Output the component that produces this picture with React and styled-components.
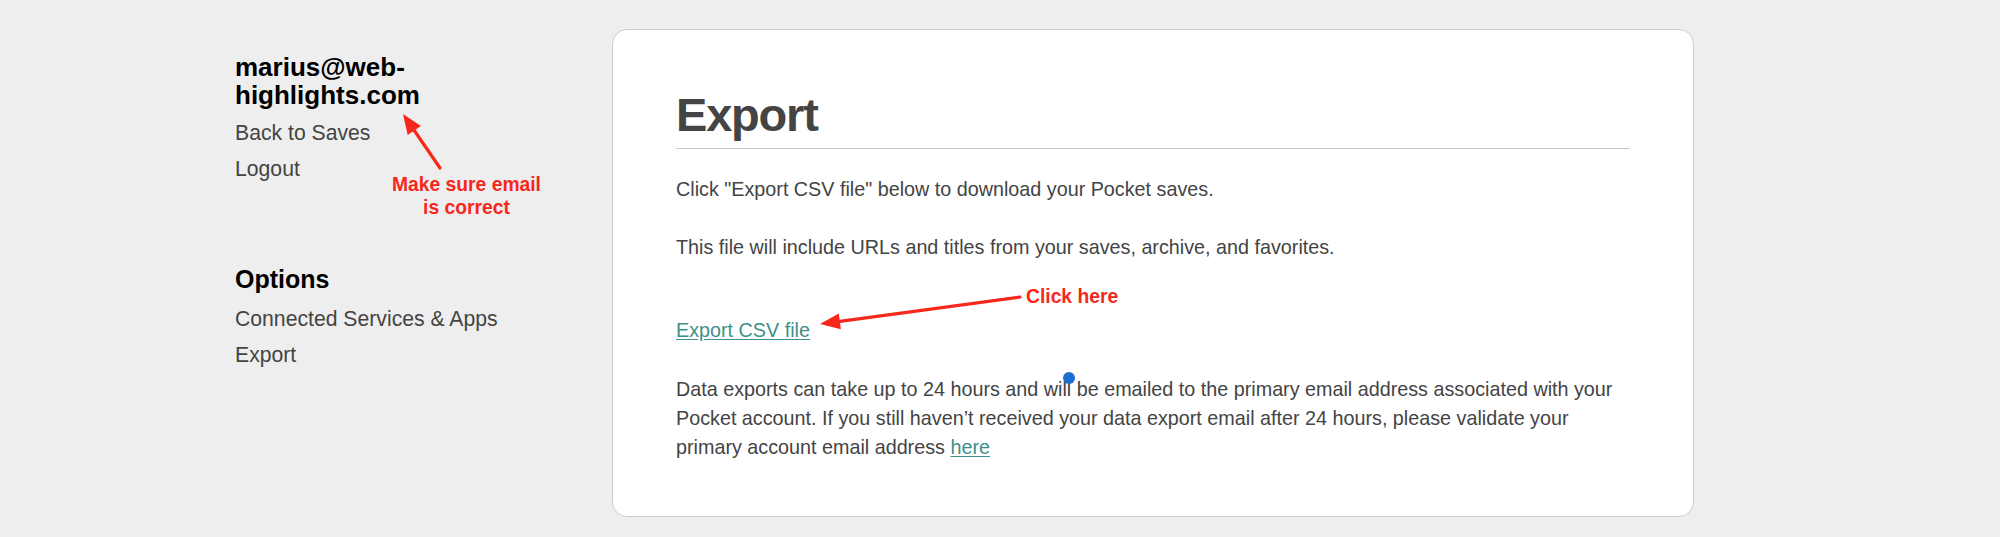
import React from "react";
import styled, { createGlobalStyle } from "styled-components";

const GlobalStyle = createGlobalStyle`
  html, body {
    margin: 0;
    padding: 0;
    background: #eeeeee;
  }
  body {
    font-family: "Liberation Sans", Arial, Helvetica, sans-serif;
    color: #444444;
  }
`;

const Page = styled.div`
  position: relative;
  min-height: 537px;
  box-sizing: border-box;
  padding: 29px 0 0 235px;
  display: grid;
  grid-template-columns: 377px 1082px;
  align-items: start;
`;

const Sidebar = styled.nav`
  padding-top: 24px;
  width: 250px;
`;

const Account = styled.h2`
  margin: 0;
  font-size: 26px;
  line-height: 28px;
  font-weight: 700;
  color: #000;
  word-break: break-word;
`;

const SectionTitle = styled.h3`
  margin: ${(p) => p.$top || 0}px 0 0;
  font-size: 25px;
  line-height: 28px;
  font-weight: 700;
  color: #000;
`;

const NavList = styled.ul`
  list-style: none;
  margin: ${(p) => p.$top || 0}px 0 0;
  padding: 0;
`;

const NavItem = styled.li`
  font-size: 21.2px;
  line-height: 36px;
  color: #444;
  white-space: nowrap;
`;

const Card = styled.section`
  box-sizing: border-box;
  height: 488px;
  background: #fff;
  border: 1px solid #cccccc;
  border-radius: 15px;
  padding: 57px 63px 0;
`;

const Title = styled.h1`
  margin: 0;
  font-size: 47px;
  letter-spacing: -1.2px;
  line-height: 56px;
  font-weight: 700;
  color: #444;
  padding-bottom: 5px;
  border-bottom: 1px solid #c8c8c8;
`;

const Text = styled.p`
  margin: ${(p) => p.$top || 0}px 0 0;
  font-size: 19.75px;
  line-height: 29px;
  color: #444;
`;

const Link = styled.a`
  color: #3f8f8b;
  text-decoration: underline;
  text-underline-offset: 2px;
  cursor: pointer;
`;

const Note = styled.div`
  position: absolute;
  left: ${(p) => p.$x}px;
  top: ${(p) => p.$y}px;
  font-size: 19.3px;
  line-height: 23px;
  font-weight: 700;
  color: #f7281b;
  text-align: center;
  white-space: nowrap;
`;

const Overlay = styled.svg`
  position: absolute;
  left: 0;
  top: 0;
  pointer-events: none;
`;

const Dot = styled.span`
  position: absolute;
  left: 1063px;
  top: 372px;
  width: 12px;
  height: 12px;
  border-radius: 50%;
  background: #1b6fd0;
`;

function Arrow({ x1, y1, x2, y2 }) {
  const a = Math.atan2(y2 - y1, x2 - x1);
  const len = 20;
  const w = 8;
  const bx = x2 - len * Math.cos(a);
  const by = y2 - len * Math.sin(a);
  const px = -Math.sin(a) * w;
  const py = Math.cos(a) * w;
  return (
    <g>
      <line x1={x1} y1={y1} x2={bx} y2={by} stroke="#f7281b" strokeWidth="3.2" strokeLinecap="round" />
      <polygon points={`${x2},${y2} ${bx + px},${by + py} ${bx - px},${by - py}`} fill="#f7281b" />
    </g>
  );
}

export default function App() {
  return (
    <>
      <GlobalStyle />
      <Page>
        <Sidebar>
          <Account>marius@web-highlights.com</Account>
          <NavList $top={6}>
            <NavItem>Back to Saves</NavItem>
            <NavItem>Logout</NavItem>
          </NavList>
          <SectionTitle $top={78}>Options</SectionTitle>
          <NavList $top={8}>
            <NavItem>Connected Services &amp; Apps</NavItem>
            <NavItem>Export</NavItem>
          </NavList>
        </Sidebar>

        <Card>
          <Title>Export</Title>
          <Text $top={26}>Click "Export CSV file" below to download your Pocket saves.</Text>
          <Text $top={29}>This file will include URLs and titles from your saves, archive, and favorites.</Text>
          <Text $top={54}>
            <Link>Export CSV file</Link>
          </Text>
          <Text $top={30}>
            Data exports can take up to 24 hours and will be emailed to the primary email address associated with your
            Pocket account. If you still haven’t received your data export email after 24 hours, please validate your
            primary account email address <Link>here</Link>
          </Text>
        </Card>

        <Overlay width="2000" height="537" viewBox="0 0 2000 537">
          <Arrow x1={440} y1={168} x2={403} y2={114} />
          <Arrow x1={1020} y1={297} x2={820} y2={324} />
        </Overlay>
        <Note $x={392} $y={173}>
          Make sure email
          <br />
          is correct
        </Note>
        <Note $x={1026} $y={285}>Click here</Note>
        <Dot />
      </Page>
    </>
  );
}
